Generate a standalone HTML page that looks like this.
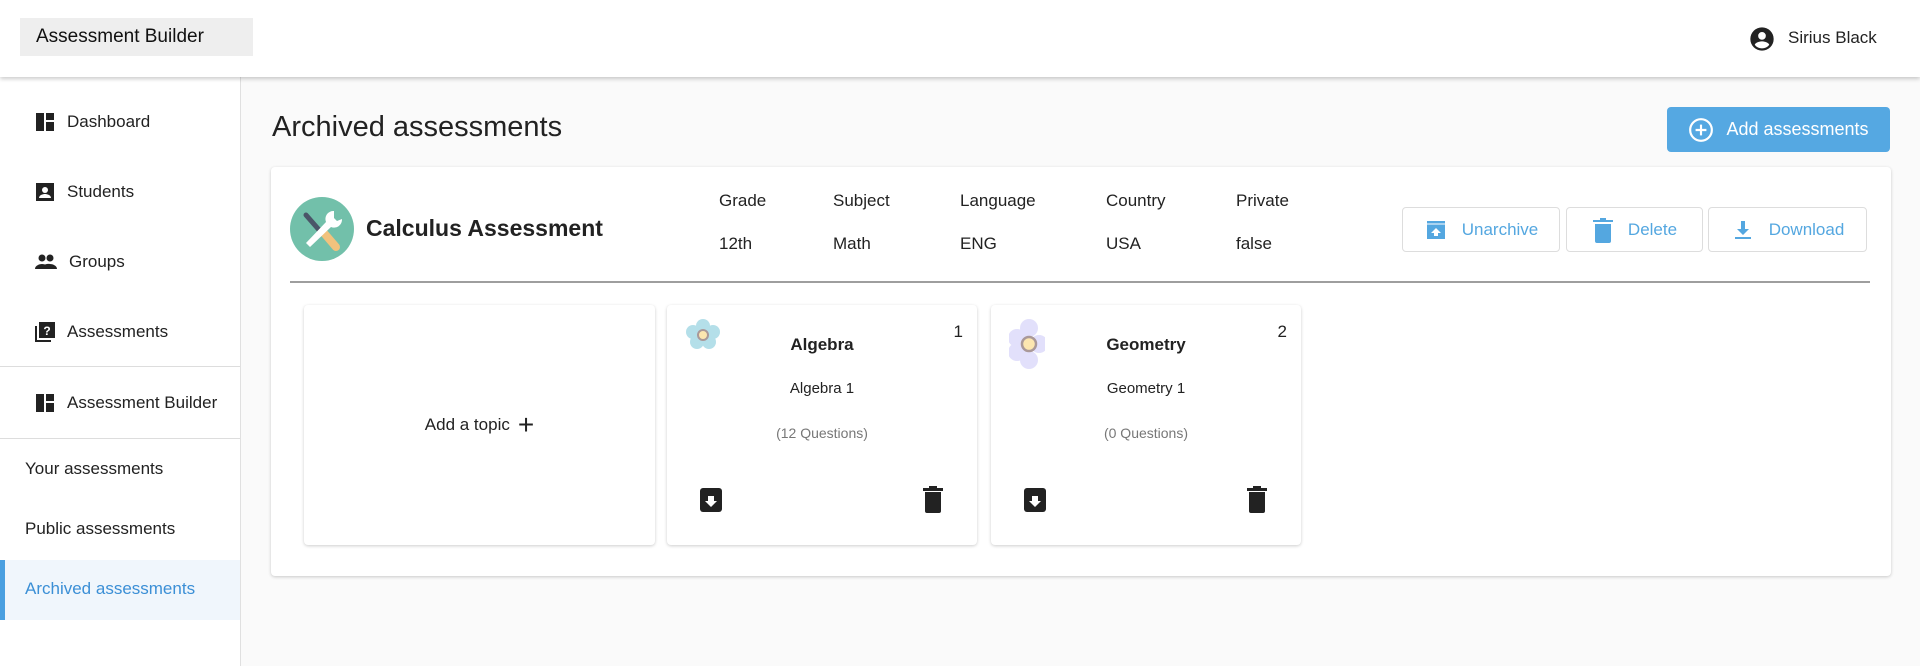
<!DOCTYPE html>
<html><head><meta charset="utf-8"><style>
*{box-sizing:border-box;margin:0;padding:0}
body{width:1920px;height:666px;overflow:hidden;background:#fafafa;font-family:"Liberation Sans",sans-serif;color:#222;position:relative}
.abs{position:absolute}
.header{left:0;top:0;width:1920px;height:77px;background:#fff;box-shadow:0 2px 4px rgba(0,0,0,.2);z-index:2}
.side{left:0;top:77px;width:241px;height:589px;background:#fff;border-right:1px solid #e0e0e0}
.si{position:absolute;left:33px;font-size:17px;display:flex;align-items:center;gap:10px;color:#222}
.sub{position:absolute;left:25px;font-size:17px;color:#222}
.card{background:#fff;border-radius:4px;box-shadow:0 1px 3px rgba(0,0,0,.2)}
.lbl{font-size:17px;color:#222}
.ob{position:absolute;top:207px;height:45px;border:1px solid #ddd;border-radius:4px;background:#fff;color:#54a7e0;font-size:17px;display:flex;align-items:center;justify-content:center;gap:14px}
.tc{position:absolute;top:305px;height:240px;text-align:center}
</style></head><body>
<div class="abs header">
 <div class="abs" style="left:20px;top:18px;width:233px;height:38px;background:#eee;font-size:19px;line-height:38px;padding-left:16px;color:#111">Assessment Builder</div>
 <svg class="abs" style="left:1748px;top:25px" width="28" height="28" viewBox="0 0 24 24"><path fill="#222" d="M12 2a10 10 0 1 0 0 20 10 10 0 0 0 0-20zm0 4a3.3 3.3 0 1 1 0 6.6A3.3 3.3 0 0 1 12 6zm0 14a8 8 0 0 1-6.2-3c.4-2 4.1-3 6.2-3s5.8 1 6.2 3A8 8 0 0 1 12 20z"/></svg>
 <div class="abs" style="left:1788px;top:28px;font-size:17px">Sirius Black</div>
</div>
<div class="abs side">
 <div class="si" style="top:33px"><svg width="24" height="24" viewBox="0 0 24 24"><path fill="#222" d="M3 3h8v18H3zM13 3h8v7h-8zM13 12h8v9h-8z"/></svg>Dashboard</div>
 <div class="si" style="top:103px"><svg width="24" height="24" viewBox="0 0 24 24"><path fill="#222" d="M3 3h18v18H3z"/><circle cx="12" cy="10" r="3" fill="#fff"/><path fill="#fff" d="M6 18c0-3 4-4 6-4s6 1 6 4z"/></svg>Students</div>
 <div class="si" style="top:173px"><svg width="26" height="24" viewBox="0 0 24 24"><circle cx="8" cy="8" r="3.5" fill="#222"/><circle cx="16" cy="8" r="3.5" fill="#222"/><path fill="#222" d="M1 19c0-3.5 4.5-5 7-5s7 1.5 7 5zM13 19c0-2-.5-3.5-2-4.5 1.5-.5 3.5-.7 5-.5 2.5 0 7 1.5 7 5z"/></svg>Groups</div>
 <div class="si" style="top:243px"><svg width="24" height="24" viewBox="0 0 24 24"><path fill="#222" d="M2 6h2v14h14v2H2zM6 2h16v16H6z"/><text x="14" y="15" font-size="12" fill="#fff" text-anchor="middle" font-family="Liberation Sans" font-weight="bold">?</text></svg>Assessments</div>
 <div class="abs" style="left:0;top:289px;width:240px;height:1px;background:#ddd"></div>
 <div class="si" style="top:314px"><svg width="24" height="24" viewBox="0 0 24 24"><path fill="#222" d="M3 3h8v18H3zM13 3h8v7h-8zM13 12h8v9h-8z"/></svg>Assessment Builder</div>
 <div class="abs" style="left:0;top:361px;width:240px;height:1px;background:#ddd"></div>
 <div class="sub" style="top:382px">Your assessments</div>
 <div class="sub" style="top:442px">Public assessments</div>
 <div class="abs" style="left:0;top:483px;width:240px;height:60px;background:#f0f6fc;border-left:5px solid #4a9fe0"></div>
 <div class="sub" style="top:502px;color:#3b8fd6">Archived assessments</div>
</div>
<div class="abs" style="left:272px;top:111px;font-size:29px;color:#222">Archived assessments</div>
<div class="abs" style="left:1667px;top:107px;width:223px;height:45px;background:#55a8e2;border-radius:4px;color:#fff;font-size:18px;display:flex;align-items:center;justify-content:center;gap:12px">
 <svg width="26" height="26" viewBox="0 0 24 24"><circle cx="12" cy="12" r="10" fill="none" stroke="#fff" stroke-width="2"/><path d="M12 7v10M7 12h10" stroke="#fff" stroke-width="2"/></svg>Add assessments</div>
<div class="abs card" style="left:271px;top:167px;width:1620px;height:409px"></div>
<svg class="abs" style="left:290px;top:197px" width="64" height="64" viewBox="0 0 64 64"><circle cx="32" cy="32" r="32" fill="#72c0aa"/><path d="M34 36l12 14" stroke="#f1c27d" stroke-width="8" stroke-linecap="round"/><path d="M16 18l14 16" stroke="#4a5568" stroke-width="5" stroke-linecap="round"/><path d="M44 14a8 8 0 0 0-8 11L16 46l4 4 21-20a8 8 0 0 0 11-8l-5 2-3-3z" fill="#fff"/></svg>
<div class="abs" style="left:366px;top:215px;font-size:23px;font-weight:bold;color:#222">Calculus Assessment</div>
<div class="abs lbl" style="left:719px;top:191px">Grade</div><div class="abs lbl" style="left:719px;top:234px">12th</div>
<div class="abs lbl" style="left:833px;top:191px">Subject</div><div class="abs lbl" style="left:833px;top:234px">Math</div>
<div class="abs lbl" style="left:960px;top:191px">Language</div><div class="abs lbl" style="left:960px;top:234px">ENG</div>
<div class="abs lbl" style="left:1106px;top:191px">Country</div><div class="abs lbl" style="left:1106px;top:234px">USA</div>
<div class="abs lbl" style="left:1236px;top:191px">Private</div><div class="abs lbl" style="left:1236px;top:234px">false</div>
<div class="ob" style="left:1402px;width:158px"><svg width="24" height="24" viewBox="0 0 24 24"><path fill="#54a7e0" d="M3 3h18v18H3z"/><path fill="#fff" d="M12 10l-5 5h3v3h4v-3h3z"/><path d="M3 6h18" stroke="#fff" stroke-width="1"/></svg>Unarchive</div>
<div class="ob" style="left:1566px;width:137px"><svg width="22" height="26" viewBox="0 0 22 26"><path fill="#54a7e0" d="M3 7h16v17a2 2 0 0 1-2 2H5a2 2 0 0 1-2-2zM1 3h20v2H1zM8 1h6v2H8z"/></svg>Delete</div>
<div class="ob" style="left:1708px;width:159px"><svg width="24" height="24" viewBox="0 0 24 24"><path fill="#54a7e0" d="M10 3h4v8h4l-6 6-6-6h4zM4 19h16v2H4z"/></svg>Download</div>
<div class="abs" style="left:290px;top:281px;width:1580px;height:2px;background:#9e9e9e"></div>
<div class="abs card tc" style="left:304px;width:351px;display:flex;align-items:center;justify-content:center;font-size:17px;gap:8px">Add a topic <span style="font-size:28px;font-weight:300;line-height:1">+</span></div>
<div class="abs card tc" style="left:667px;width:310px">
 <svg class="abs" style="left:18px;top:13px" width="36" height="32" viewBox="0 0 36 32"><g fill="#b4dfe9"><circle cx="18" cy="8" r="7"/><circle cx="8" cy="14" r="7"/><circle cx="28" cy="14" r="7"/><circle cx="12" cy="24" r="7"/><circle cx="24" cy="24" r="7"/></g><circle cx="18" cy="17" r="5" fill="#fce6b0" stroke="#a99" stroke-width="2"/></svg>
 <div class="abs" style="right:14px;top:17px;font-size:17px">1</div>
 <div style="margin-top:30px;font-size:17px;font-weight:bold">Algebra</div>
 <div style="margin-top:25px;font-size:15px">Algebra 1</div>
 <div style="margin-top:28px;font-size:14px;color:#777">(12 Questions)</div>
 <svg class="abs" style="left:32px;top:182px" width="24" height="26" viewBox="0 0 24 26"><rect x="1" y="1" width="22" height="24" rx="3" fill="#222"/><path fill="#fff" d="M9 9h6v5h3l-6 6-6-6h3z"/></svg>
 <svg class="abs" style="left:255px;top:180px" width="22" height="28" viewBox="0 0 22 28"><path fill="#222" d="M3 7h16v19a2 2 0 0 1-2 2H5a2 2 0 0 1-2-2zM1 3h20v3H1zM7 1h8v2H7z"/></svg>
</div>
<div class="abs card tc" style="left:991px;width:310px">
 <svg class="abs" style="left:18px;top:13px" width="36" height="52" viewBox="0 0 36 52"><g fill="#e2e0fb"><circle cx="20" cy="10" r="9"/><circle cx="8" cy="20" r="9"/><circle cx="8" cy="34" r="9"/><circle cx="20" cy="42" r="9"/><circle cx="30" cy="26" r="9"/></g><circle cx="20" cy="26" r="7" fill="#fce6b0" stroke="#a99" stroke-width="2.5"/></svg>
 <div class="abs" style="left:54px;top:10px;width:20px;height:60px;background:#fff"></div>
 <div class="abs" style="right:14px;top:17px;font-size:17px">2</div>
 <div style="margin-top:30px;font-size:17px;font-weight:bold">Geometry</div>
 <div style="margin-top:25px;font-size:15px">Geometry 1</div>
 <div style="margin-top:28px;font-size:14px;color:#777">(0 Questions)</div>
 <svg class="abs" style="left:32px;top:182px" width="24" height="26" viewBox="0 0 24 26"><rect x="1" y="1" width="22" height="24" rx="3" fill="#222"/><path fill="#fff" d="M9 9h6v5h3l-6 6-6-6h3z"/></svg>
 <svg class="abs" style="left:255px;top:180px" width="22" height="28" viewBox="0 0 22 28"><path fill="#222" d="M3 7h16v19a2 2 0 0 1-2 2H5a2 2 0 0 1-2-2zM1 3h20v3H1zM7 1h8v2H7z"/></svg>
</div>
</body></html>
